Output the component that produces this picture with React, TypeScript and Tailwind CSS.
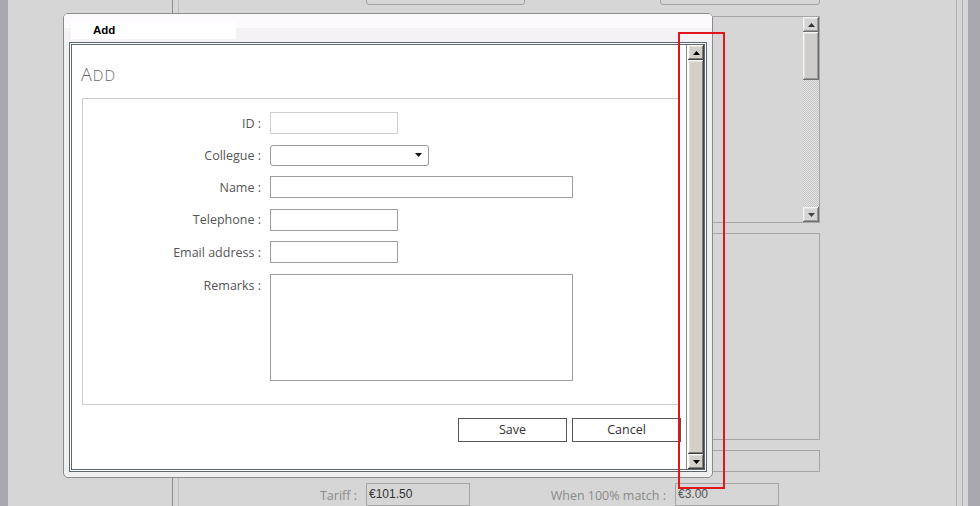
import React from "react";

const bevel =
  "shadow-[inset_-1px_-1px_#404040,inset_1px_1px_#ffffff,inset_-2px_-2px_#808080,inset_2px_2px_#e4e1da]";
const bevelGray =
  "shadow-[inset_-1px_-1px_#6e6e6e,inset_1px_1px_#f4f4f4,inset_-2px_-2px_#9a9a9a,inset_2px_2px_#e2e2e2]";

function Up({ color }: { color: string }) {
  return (
    <svg width="7" height="4" viewBox="0 0 7 4">
      <polygon points="3.5,0 7,4 0,4" fill={color} />
    </svg>
  );
}
function Down({ color }: { color: string }) {
  return (
    <svg width="7" height="4" viewBox="0 0 7 4">
      <polygon points="0,0 7,0 3.5,4" fill={color} />
    </svg>
  );
}

function Row({ label, children, top }: { label: string; children: React.ReactNode; top?: boolean }) {
  return (
    <div className={`flex ${top ? "items-start" : "items-center"}`}>
      <div
        className={`w-[178px] shrink-0 text-right text-[12.5px] leading-[17px] text-[#555] ${
          top ? "pt-[3px]" : ""
        }`}
      >
        {label}
      </div>
      <div className="ml-[9px]">{children}</div>
    </div>
  );
}

export default function App() {
  return (
    <div className="relative w-[980px] h-[506px] overflow-hidden bg-[#d6d6d6] flex font-['Open_Sans',sans-serif]">
      <div className="w-[8px] shrink-0 bg-[#a9a8ae]" />
      <div className="w-[164px] shrink-0" />
      <div className="w-[1px] shrink-0 bg-[#8f8f8f]" />
      <div className="w-[5px] shrink-0" />
      <div className="w-[1px] shrink-0 bg-[#bcbcbc]" />

      {/* background main panel */}
      <div className="w-[777px] shrink-0 flex flex-col">
        <div className="-mt-[16px] h-[21px] flex items-center">
          <div className="w-[178px] shrink-0 text-right text-[12.5px] leading-[17px] text-[#8a8a8a] -mt-[12px]">
            Discount by matching :
          </div>
          <div className="ml-[9px] w-[159px] h-[21px] rounded-[3px] border border-[#a3a3a3]" />
          <div className="ml-[135px] w-[160px] h-[21px] rounded-[3px] border border-[#a3a3a3]" />
        </div>

        <div className="mt-[11px] pl-[521px] flex flex-col">
          <div className="w-[120px] h-[207px] border border-[#a6a6a6] flex justify-end">
            <div className="w-[16px] flex flex-col">
              <div className={`h-[15px] bg-[#d4d4d4] flex items-center justify-center ${bevelGray}`}>
                <Up color="#333" />
              </div>
              <div className={`h-[48px] bg-[#cfcccc] ${bevelGray}`} />
              <div className="flex-1 bg-[repeating-conic-gradient(#c4c4c4_0%_25%,#e4e4e4_0%_50%)] bg-[length:2px_2px]" />
              <div className={`h-[15px] bg-[#d4d4d4] flex items-center justify-center ${bevelGray}`}>
                <Down color="#444" />
              </div>
            </div>
          </div>
          <div className="mt-[10px] w-[120px] h-[207px] border border-[#a6a6a6]" />
          <div className="mt-[10px] w-[120px] h-[22px] border border-[#a6a6a6]" />
        </div>

        <div className="mt-[11px] h-[23px] flex items-start">
          <div className="w-[178px] shrink-0 text-right text-[12.5px] leading-[17px] pt-[4px] text-[#8a8a8a]">
            Tariff :
          </div>
          <div className="ml-[9px] w-[104px] h-[23px] border border-[#a5a5a5] pl-[2px] text-[12px] leading-[20px] text-[#333] font-['Liberation_Sans',sans-serif]">
            €101.50
          </div>
          <div className="w-[196px] shrink-0 text-right text-[12.5px] leading-[17px] pt-[4px] text-[#8a8a8a]">
            When 100% match :
          </div>
          <div className="ml-[9px] w-[104px] h-[23px] border border-[#a5a5a5] pl-[2px] text-[12px] leading-[20px] text-[#555] font-['Liberation_Sans',sans-serif]">
            €3.00
          </div>
        </div>
      </div>

      <div className="w-[1px] shrink-0 bg-[#b3b3b3]" />
      <div className="w-[5px] shrink-0" />
      <div className="w-[1px] shrink-0 bg-[#b0b0b0]" />
      <div className="w-[5px] shrink-0" />
      <div className="flex-1 bg-[#a9a8ae]" />

      {/* dialog */}
      <div className="absolute left-[63px] top-[13px] w-[650px] h-[465px] rounded-[5px] border border-[#8c8c8c] bg-[#efefef] flex flex-col overflow-hidden">
        <div className="h-[28px] shrink-0 bg-[linear-gradient(#fdfafd_50%,#f5f2f5_50%)] flex">
          <div className="ml-[7px] mt-[7px] w-[165px] h-[18px] bg-white pl-[22px] text-[11.5px] leading-[18px] font-bold text-black font-['Liberation_Sans',sans-serif]">
            Add
          </div>
        </div>
        <div className="ml-[5px] w-[638px] h-[430px] border-[3px] border-double border-[#5d6771] bg-white flex">
          <div className="flex-1 flex flex-col">
            <div className="pt-[17px] pl-[9px] h-[53px] text-[18px] leading-[24px] font-light text-[#666] tracking-[1px]">
              A<span className="uppercase text-[15px]">dd</span>
            </div>
            <div className="ml-[10px] w-[598px] h-[307px] border border-[#cccccc] pt-[13px] flex flex-col gap-[10.6px]">
              <Row label="ID :">
                <div className="w-[128px] h-[22px] border border-[#cfcfcf]" />
              </Row>
              <Row label="Collegue :">
                <div className="w-[159px] h-[21px] rounded-[3px] border border-[#9a9a9a] flex items-center justify-end pr-[6px]">
                  <Down color="#111" />
                </div>
              </Row>
              <Row label="Name :">
                <div className="w-[303px] h-[22px] border border-[#9e9e9e]" />
              </Row>
              <Row label="Telephone :">
                <div className="w-[128px] h-[22px] border border-[#9e9e9e]" />
              </Row>
              <Row label="Email address :">
                <div className="w-[128px] h-[22px] border border-[#9e9e9e]" />
              </Row>
              <Row label="Remarks :" top>
                <div className="w-[303px] h-[107px] border border-[#9e9e9e]" />
              </Row>
            </div>
            <div className="mt-[13px] flex justify-end gap-[5px] mr-[5px]">
              <div className="w-[109px] h-[24px] border border-[#555] bg-white flex items-center justify-center text-[12.5px] text-[#333]">
                Save
              </div>
              <div className="w-[109px] h-[24px] border border-[#555] bg-white flex items-center justify-center text-[12.5px] text-[#333]">
                Cancel
              </div>
            </div>
          </div>
          <div className="w-[18px] shrink-0 border-l border-[#8a8a8a] bg-white pl-[1px] flex">
            <div className="w-[16px] flex flex-col">
              <div className={`h-[15px] bg-[#d4d0c8] flex items-center justify-center ${bevel}`}>
                <Up color="#000" />
              </div>
              <div className={`flex-1 bg-[#d4d0c8] ${bevel}`} />
              <div className={`h-[15px] bg-[#d4d0c8] flex items-center justify-center ${bevel}`}>
                <Down color="#000" />
              </div>
            </div>
          </div>
        </div>
      </div>

      {/* red highlight */}
      <div className="absolute left-[678px] top-[32px] w-[47px] h-[457px] border-2 border-[#e0161c]" />
    </div>
  );
}
